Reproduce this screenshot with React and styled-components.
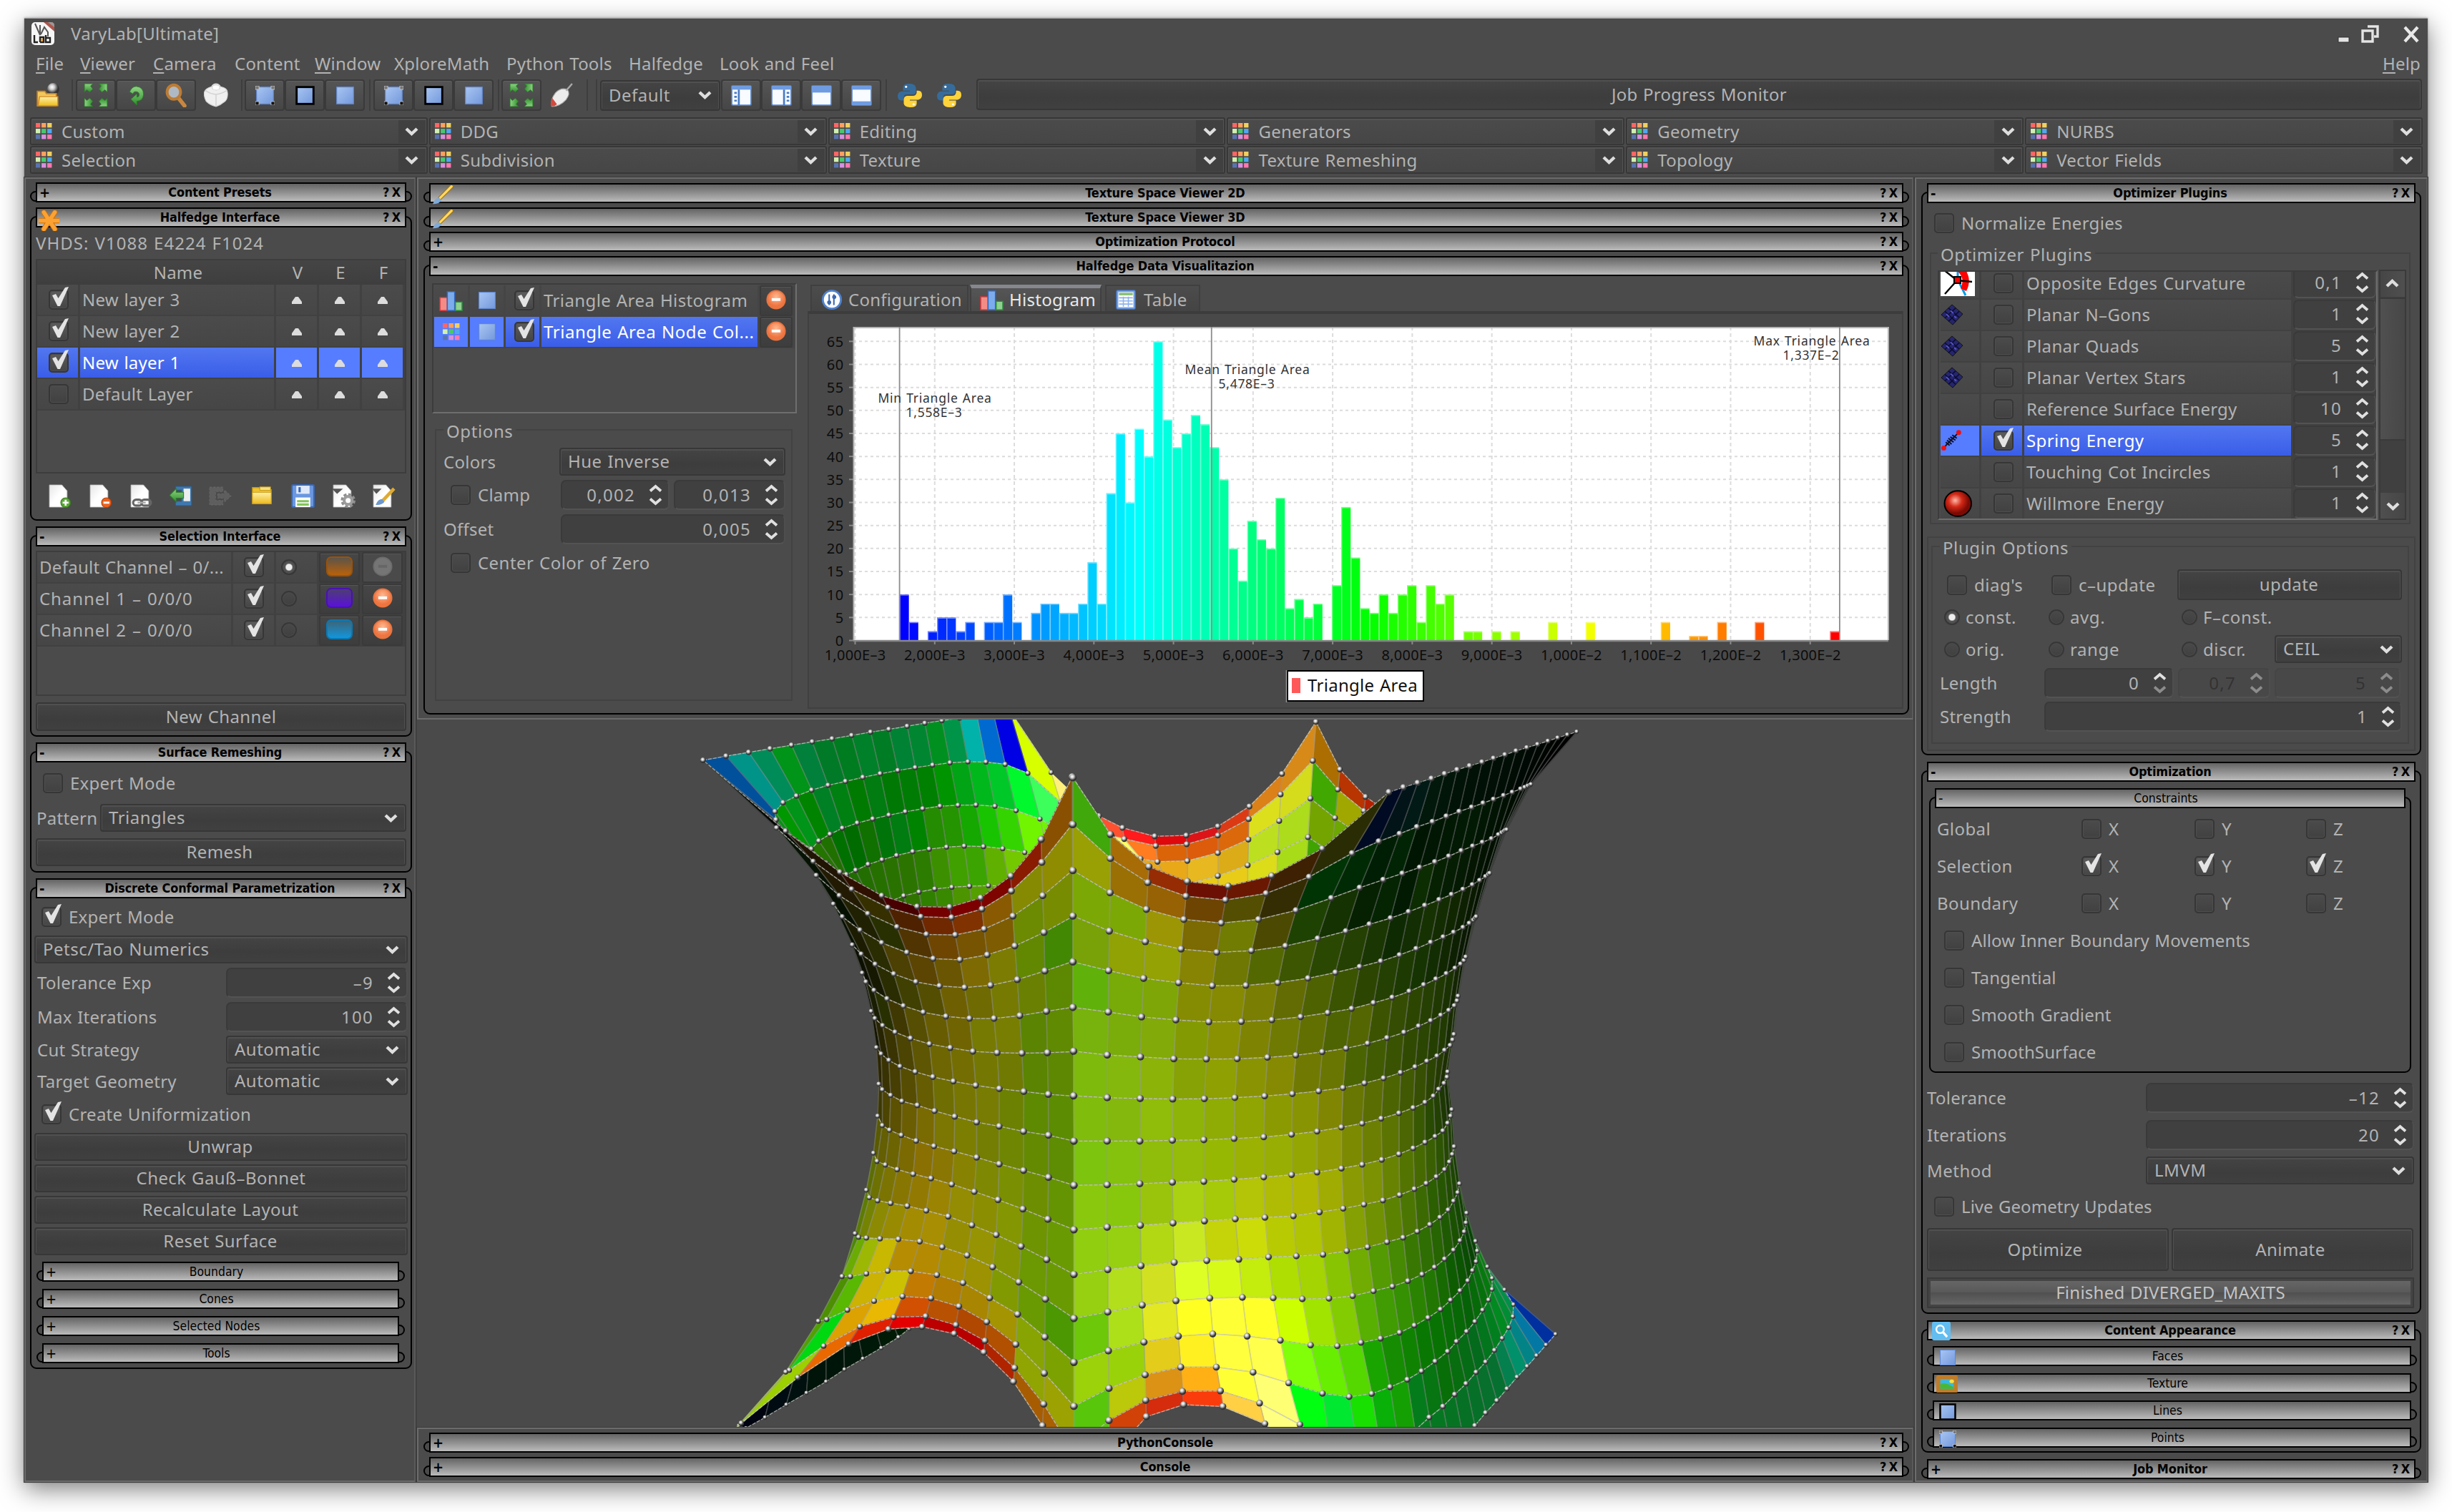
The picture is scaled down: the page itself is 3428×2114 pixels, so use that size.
import React from "react";
import styled, { createGlobalStyle, css } from "styled-components";

/* ------------------------------------------------------------------ */
/* Base                                                                */
/* ------------------------------------------------------------------ */

const BG = "#4b4b4b";
const INK = "#b3b3b3";
const EDGE = "#373737";

const GlobalStyle = createGlobalStyle`
  *, *::before, *::after { box-sizing: border-box; }
  body {
    margin: 0;
    background: #fff;
    color: ${INK};
    font-family: "Noto Sans", "Open Sans", sans-serif;
    font-size: 24px;
    line-height: 30px;
    letter-spacing: 0.25px;
    word-spacing: 1px;
  }
`;

const Desktop = styled.div`
  width: 3428px;
  height: 2114px;
  padding: 25px 34px 42px;
  overflow: hidden;
`;

const Frame = styled.div`
  width: 3360px;
  height: 2047px;
  display: flex;
  flex-direction: column;
  background: ${BG};
  border-top: 1px solid #a9a9a9;
  box-shadow: 0 10px 32px rgba(0, 0, 0, 0.5), 0 0 3px rgba(0, 0, 0, 0.35);
`;

const bevel = css`
  border: 2px solid ${EDGE};
  border-radius: 4px;
  background: linear-gradient(#444, #3d3d3d 60%, #404040);
  box-shadow: inset 0 1px 0 1px #505050;
`;

/* ------------------------------------------------------------------ */
/* Title and menu                                                      */
/* ------------------------------------------------------------------ */

const TitleRow = styled.div`
  flex: 0 0 42px;
  display: flex;
  align-items: center;
  padding: 0 12px 0 10px;
`;
const WindowTitle = styled.div`
  margin-left: 23px;
  flex: 1;
`;
const MenuRow = styled.div`
  flex: 0 0 40px;
  display: flex;
  align-items: center;
  padding: 2px 10px 0 16px;
`;
const MenuItem = styled.div`
  width: ${(p) => (p.$w ? p.$w + "px" : "auto")};
  letter-spacing: 0.2px;
  white-space: nowrap;
`;
const Mnemonic = styled.span`
  text-decoration: underline;
  text-decoration-thickness: 2px;
  text-underline-offset: 3px;
`;
const Spacer = styled.div`
  flex: 1;
`;

/* ------------------------------------------------------------------ */
/* Toolbar                                                             */
/* ------------------------------------------------------------------ */

const ToolRow = styled.div`
  flex: 0 0 50px;
  display: flex;
  align-items: center;
  padding: 0 8px 0 16px;
`;
const Tool = styled.div`
  width: 56px;
  height: 44px;
  display: flex;
  align-items: center;
  justify-content: center;
  border: 2px solid #3a3a3a;
  border-radius: 4px;
  background: linear-gradient(#555, #464646);
  box-shadow: inset 0 1px 0 #606060;
`;
const PlainTool = styled.div`
  height: 44px;
  display: flex;
  align-items: center;
  margin: 0 ${(p) => p.$r ?? 0}px 0 ${(p) => p.$l ?? 0}px;
`;
const Divider = styled.div`
  width: 2px;
  height: 44px;
  background: #3e3e3e;
  margin: 0 ${(p) => p.$r}px 0 ${(p) => p.$l}px;
`;
const Monitor = styled.div`
  ${bevel}
  flex: 1;
  height: 44px;
  margin: 0 0 3px 21px;
  display: flex;
  align-items: center;
  justify-content: center;
`;

const Shelf = styled.div`
  flex: 0 0 79px;
  margin: 6px 7px 5px 8px;
  display: grid;
  grid-template-columns: repeat(6, 1fr);
  grid-auto-rows: 39px;
  gap: 1px 2px;
`;
const ShelfItem = styled.div`
  display: flex;
  align-items: center;
  border: 2px solid ${EDGE};
  border-radius: 3px;
  padding-left: 6px;
  background: linear-gradient(#4b4b4b, #464646);
  box-shadow: inset 0 1px 0 1px #545454;
`;
const ShelfName = styled.div`
  flex: 1;
  margin-left: 13px;
`;
const ShelfArrow = styled.div`
  width: 38px;
  height: 32px;
  margin-right: 1px;
  display: flex;
  align-items: center;
  justify-content: center;
  background: #404040;
`;

/* ------------------------------------------------------------------ */
/* Columns and slots                                                   */
/* ------------------------------------------------------------------ */

const Body = styled.div`
  flex: 1;
  min-height: 0;
  display: flex;
  gap: 2px;
  background: #434343;
`;
const Column = styled.div`
  flex: 0 0 ${(p) => p.$w}px;
  min-width: 0;
  display: flex;
  flex-direction: column;
  background: ${BG};
  border: 2px solid #6c6c6c;
  border-right-color: #5a5a5a;
  outline: 1px solid #3b3b3b;
  padding: ${(p) => p.$pad};
  gap: ${(p) => p.$gap ?? 20}px;
`;
const Center = styled.div`
  flex: 0 0 2092px;
  min-width: 0;
  display: flex;
  flex-direction: column;
`;
const Dock = styled.div`
  flex: 0 0 ${(p) => p.$h}px;
  display: flex;
  flex-direction: column;
  gap: 19px;
  padding: ${(p) => p.$pad};
  background: ${BG};
  border: 2px solid #6c6c6c;
  border-right-color: #5a5a5a;
  outline: 1px solid #3b3b3b;
`;
const Viewport = styled.div`
  flex: 1;
  min-height: 0;
  background: #4a4a4a;
  svg { display: block; }
`;

const SlotBox = styled.section`
  flex: 0 0 ${(p) => p.$h}px;
  height: ${(p) => p.$h}px;
  margin: ${(p) => p.$m ?? 0};
  border: 2px solid #000;
  border-radius: 9px;
  display: flex;
  flex-direction: column;
`;
const SlotBar = styled.header`
  flex: 0 0 28px;
  margin: -14px 6px 0;
  position: relative;
  display: flex;
  align-items: center;
  border: 2px solid #000;
  background: linear-gradient(#646464, #8b8b8b 45%, #b2b2b2 90%, #bcbcbc);
  color: #000;
  font-family: "DejaVu Sans Condensed", "DejaVu Sans", sans-serif;
  font-stretch: condensed;
  font-size: ${(p) => (p.$sub ? 17.4 : 17.9)}px;
  font-weight: ${(p) => (p.$sub ? 400 : 700)};
  line-height: 22px;
  letter-spacing: ${(p) => (p.$sub ? 0 : -0.12)}px;
  word-spacing: 0;
`;
const SlotSign = styled.span`
  width: 46px;
  padding-left: 3px;
  display: flex;
  align-items: center;
  font-size: 20px;
`;
const SlotTitle = styled.span`
  flex: 1;
  text-align: center;
  padding-right: ${(p) => (p.$sub ? 12 : 3)}px;
`;
const SlotTools = styled.span`
  width: 46px;
  padding-right: 6px;
  text-align: right;
  word-spacing: -2px;
`;
/* Icons are taller than the bar, so they hang over its lower edge. */
const BarIcon = styled.span`
  position: absolute;
  left: ${(p) => p.$x}px;
  top: ${(p) => p.$y}px;
  display: flex;
`;

function Slot({ title, h = 15, sub, open, icon, ix = 2, iy = 1, m, children }) {
  return (
    <SlotBox $h={h} $m={m}>
      <SlotBar $sub={sub}>
        <SlotSign>{icon ? null : open ? "-" : "+"}</SlotSign>
        {icon && <BarIcon $x={ix} $y={iy}>{icon}</BarIcon>}
        <SlotTitle $sub={sub}>{title}</SlotTitle>
        <SlotTools>{sub ? "" : "? X"}</SlotTools>
      </SlotBar>
      {children}
    </SlotBox>
  );
}

/* ------------------------------------------------------------------ */
/* Controls                                                            */
/* ------------------------------------------------------------------ */

const Stack = styled.div`
  display: flex;
  flex-direction: column;
  padding: ${(p) => p.$pad ?? "0"};
  gap: ${(p) => p.$gap ?? 0}px;
`;
const Row = styled.div`
  display: flex;
  align-items: center;
  height: ${(p) => p.$h}px;
  padding-left: ${(p) => p.$l ?? 0}px;
  margin-top: ${(p) => p.$t ?? 0}px;
  gap: ${(p) => p.$gap ?? 0}px;
`;
const Label = styled.div`
  flex: 0 0 auto;
  width: ${(p) => (p.$w ? p.$w + "px" : "auto")};
  padding-left: ${(p) => p.$l ?? 0}px;
  letter-spacing: ${(p) => p.$track ?? 0.25}px;
  white-space: nowrap;
`;
const CheckWrap = styled.div`
  flex: 0 0 auto;
  width: ${(p) => (p.$w ? p.$w + "px" : "auto")};
  display: flex;
  align-items: center;
  gap: 10px;
  white-space: nowrap;
`;
const CheckSquare = styled.span`
  position: relative;
  flex: 0 0 28px;
  height: 28px;
  border: 2px solid #363636;
  border-radius: 5px;
  background: ${(p) => (p.$on ? "linear-gradient(#5c5c5c,#454545)" : "linear-gradient(#4b4b4b,#414141)")};
  box-shadow: inset 0 0 0 1px #4e4e4e;
  svg { position: absolute; left: 2px; top: -6px; }
`;
const RadioWrap = styled(CheckWrap)`
  gap: 8px;
`;
const RadioDot = styled.span`
  flex: 0 0 22px;
  height: 22px;
  border-radius: 50%;
  border: 2px solid #373737;
  background: ${(p) =>
    p.$on ? "radial-gradient(circle, #eee 0 4px, #555 5.5px, #4c4c4c 9px)" : "linear-gradient(#494949,#404040)"};
  box-shadow: inset 0 0 0 1px #4e4e4e;
`;
const Button = styled.button`
  ${bevel}
  flex: ${(p) => (p.$w ? `0 0 ${p.$w}px` : "1 0 auto")};
  height: ${(p) => p.$h ?? 39}px;
  margin: ${(p) => p.$t ?? 0}px 0 0;
  padding: 0 ${(p) => p.$r ?? 2}px 1px 0;
  color: ${INK};
  font: inherit;
  letter-spacing: 0.4px;
  word-spacing: inherit;
  text-align: center;
`;
const ComboBox = styled.div`
  ${bevel}
  flex: ${(p) => (p.$w ? `0 0 ${p.$w}px` : "1 0 auto")};
  height: ${(p) => p.$h ?? 39}px;
  display: flex;
  align-items: center;
  justify-content: space-between;
  padding: 0 10px 1px 10px;
  letter-spacing: 0.5px;
`;
const SpinBox = styled.div`
  flex: ${(p) => (p.$w ? `0 0 ${p.$w}px` : "1 0 auto")};
  height: ${(p) => p.$h ?? 42}px;
  display: flex;
  align-items: center;
  justify-content: flex-end;
  gap: 20px;
  padding: 0 8px 1px;
  border: 2px solid ${(p) => (p.$off ? "#454545" : "#3a3a3a")};
  border-bottom-color: #535353;
  border-right-color: #4e4e4e;
  border-radius: 7px;
  background: ${(p) => (p.$off ? "#484848" : "#404040")};
  color: ${(p) => (p.$off ? "#333" : INK)};
  letter-spacing: 1.3px;
  svg { margin-left: -1px; }
`;
const Group = styled.div`
  height: ${(p) => p.$h}px;
  margin: ${(p) => p.$m};
  padding: 0 ${(p) => p.$pr ?? 8}px 0 ${(p) => p.$pl ?? 10}px;
  border: 2px solid #424242;
  display: flex;
  flex-direction: column;
`;
const GroupTitle = styled.div`
  align-self: flex-start;
  height: 24px;
  line-height: 24px;
  margin: -11px 0 0 ${(p) => p.$l ?? 0}px;
  padding: 0 4px;
  background: ${BG};
  letter-spacing: 0.6px;
`;

const Tick = () => (
  <svg width="24" height="28" viewBox="0 0 24 28">
    <path d="M1 12 L6 10 L9.5 16 L19 1 L24 0 L12 27 L8.5 27 Z" fill="#e4e4e4" />
  </svg>
);
const Chevron = () => (
  <svg width="19" height="13" viewBox="0 0 19 13">
    <path d="M2 3 L9.5 10 L17 3" fill="none" stroke="#dedede" strokeWidth="4.4" />
  </svg>
);
const Arrows = ({ off, half }) => (
  <svg width="19" height="30" viewBox="0 0 19 30">
    <path d="M2 9.5 L9.5 3 L17 9.5" fill="none" stroke={off ? "#8c8c8c" : "#e0e0e0"} strokeWidth="3.8" />
    <path d="M2 20.5 L9.5 27 L17 20.5" fill="none" stroke={off || half ? "#8c8c8c" : "#e0e0e0"} strokeWidth="3.8" />
  </svg>
);

const Check = ({ on, children, w, track }) => (
  <CheckWrap $w={w}>
    <CheckSquare $on={on}>{on && <Tick />}</CheckSquare>
    {children && <Label $track={track}>{children}</Label>}
  </CheckWrap>
);
const Radio = ({ on, children, w }) => (
  <RadioWrap $w={w}>
    <RadioDot $on={on} />
    {children && <Label $track={0.6}>{children}</Label>}
  </RadioWrap>
);
const Combo = ({ children, w, h }) => (
  <ComboBox $w={w} $h={h}><span>{children}</span><Chevron /></ComboBox>
);
const Spin = ({ children, w, h, off, half }) => (
  <SpinBox $w={w} $h={h} $off={off}><span>{children}</span><Arrows off={off} half={half} /></SpinBox>
);

/* ------------------------------------------------------------------ */
/* Icons                                                               */
/* ------------------------------------------------------------------ */

const HiddenSvg = styled.svg`
  position: absolute;
`;
const Defs = () => (
  <HiddenSvg width="0" height="0">
    <defs>
      <linearGradient id="blue" x1="0" y1="0" x2="1" y2="1"><stop offset="0" stopColor="#a9c6f2" /><stop offset="1" stopColor="#7398dc" /></linearGradient>
      <linearGradient id="gold" x1="0" y1="0" x2="0" y2="1"><stop offset="0" stopColor="#fff0a8" /><stop offset="1" stopColor="#edbb1c" /></linearGradient>
      <radialGradient id="minus" cx=".5" cy=".35"><stop offset="0" stopColor="#ffb991" /><stop offset="1" stopColor="#ee7440" /></radialGradient>
      <radialGradient id="ball" cx=".4" cy=".34"><stop offset="0" stopColor="#fff" /><stop offset=".4" stopColor="#d0d0d0" /><stop offset="1" stopColor="#333" /></radialGradient>
      <radialGradient id="red" cx=".4" cy=".38"><stop offset="0" stopColor="#ffb8a8" /><stop offset=".5" stopColor="#d42a18" /><stop offset="1" stopColor="#7c0a04" /></radialGradient>
      <linearGradient id="leaf" x1="0" y1="0" x2="0" y2="1"><stop offset="0" stopColor="#8fd484" /><stop offset="1" stopColor="#2f8f2c" /></linearGradient>
      <linearGradient id="paper" x1="0" y1="0" x2="1" y2="1"><stop offset="0" stopColor="#e6e6e6" /><stop offset=".5" stopColor="#fff" /></linearGradient>
    </defs>
  </HiddenSvg>
);

const Ico = ({ s = 32, w, children }) => (
  <svg width={w ?? s} height={s} viewBox="0 0 32 32" preserveAspectRatio="none">{children}</svg>
);

const Palette = ({ s = 24 }) => {
  const c = ["#ff6666", "#ffa060", "#f0d060", "#d0f0b0", "#48c870", "#50a8f0", "#5874b0", "#d890e0", "#ff78b0"];
  return (
    <svg width={s} height={s} viewBox="0 0 24 24">
      {c.map((f, i) => <rect key={i} x={(i % 3) * 8.4} y={Math.floor(i / 3) * 8.4} width="6.6" height="6.6" fill={f} />)}
    </svg>
  );
};
const AppIcon = () => (
  <Ico>
    <rect width="32" height="32" rx="5" fill="#f6f6f6" />
    <path d="M17 0 L32 13 V5 Q32 0 27 0 Z" fill="#b0564c" />
    <path d="M23 0 L32 7 V5 Q32 0 27 0 Z" fill="#999" />
    <path d="M5 2 L12 18 V4 M13 17 L18 7 L23 14 V20" fill="none" stroke="#555" strokeWidth="2" />
    <path d="M4 18 V28 H9 M12 28 V21 H17 V28 H12 M20 18 V28 H26 V22 H20" fill="none" stroke="#222" strokeWidth="2.4" />
    <rect x="13" y="23" width="3" height="4" fill="#e8a030" />
  </Ico>
);
const OpenIcon = () => (
  <Ico s={34}>
    <circle cx="23" cy="8" r="8" fill="url(#ball)" />
    <path d="M2 11 H12 L14 14 H27 V30 H2 Z" fill="#f2c75c" stroke="#c98224" strokeWidth="1.6" />
    <path d="M5 18 H29 V30 H3 Z" fill="url(#gold)" stroke="#d48c28" strokeWidth="1.4" />
  </Ico>
);
const ExpandIcon = () => (
  <Ico s={34} w={34}>
    {[0, 90, 180, 270].map((a) => (
      <path key={a} transform={`rotate(${a} 16 16)`} d="M1 1 H12 L9 4 L12 8 L8 12 L4 9 L1 12 Z" fill="url(#leaf)" stroke="#2c7a2a" strokeWidth=".8" />
    ))}
  </Ico>
);
const RotateIcon = () => (
  <Ico s={30} w={27}>
    <path d="M5 11 Q9 3 16 3 Q28 4 28 15 Q27 25 17 25 V31 L7 22 L17 14 V19 Q21 19 21 15 Q20 10 13 11 L10 14 Z" fill="url(#leaf)" stroke="#2c7a2a" />
  </Ico>
);
const LensIcon = () => (
  <Ico s={34} w={32}>
    <path d="M18 18 L28 30" stroke="#c88740" strokeWidth="5.5" strokeLinecap="round" />
    <circle cx="13" cy="12" r="9.4" fill="#aeb9c4" stroke="#bd7c34" strokeWidth="4" />
  </Ico>
);
const CubeIcon = () => (
  <Ico s={34}>
    <path d="M16 1 Q20 1 22 5 Q31 7 31 12 Q32 20 28 24 Q22 29 16 31 Q8 29 3 24 Q-1 16 1 11 Q3 7 10 5 Q12 1 16 1" fill="#f0f0f0" stroke="#d4d4d4" />
    <path d="M2 10 Q10 15 16 15 Q24 14 30 10 M16 15 V30" fill="none" stroke="#d2d2d2" strokeWidth="1.4" />
    <ellipse cx="16" cy="6" rx="5" ry="3.4" fill="#fff" stroke="#d0d0d0" />
  </Ico>
);
const FaceIcon = ({ s = 27, edge, points }) => (
  <Ico s={s}>
    <rect x="2" y="2" width="28" height="28" fill="url(#blue)" stroke={edge ? "#000" : "#5f86cf"} strokeWidth={edge ? 3.4 : 1.4} />
    {points && [[3, 3], [29, 3], [3, 29], [29, 29]].map(([x, y], i) => (
      <rect key={i} x={x - 3} y={y - 3} width="6" height="6" fill={i > 1 ? "#111" : "#777"} stroke="#ccc" strokeWidth="1" />
    ))}
  </Ico>
);
const MouseIcon = () => (
  <Ico s={34}>
    <path d="M3 31 Q1 22 8 13 Q16 5 24 9 Q28 14 22 22 Q14 31 3 31" fill="#ececec" stroke="#aaa" />
    <path d="M2 30 Q1 26 4 20 L10 28 Q6 32 2 30" fill="#d24a40" />
    <path d="M22 10 Q26 6 30 1" stroke="#aaa" strokeWidth="2.2" fill="none" />
  </Ico>
);
const LayoutIcon = ({ side }) => (
  <Ico s={29}>
    <rect x="1" y="1" width="30" height="30" rx="2" fill="#f8fbff" stroke="#4a7cc4" strokeWidth="2" />
    <rect x="1" y="1" width="30" height="6" fill="#6f9be0" />
    {side === "left" && <path d="M12 7 V31 M5 12 H9 M5 18 H9 M5 24 H9" stroke="#4a7cc4" strokeWidth="3" />}
    {side === "right" && <path d="M20 7 V31 M24 12 H28 M24 18 H28 M24 24 H28" stroke="#4a7cc4" strokeWidth="3" />}
    {side === "top" && <path d="M1 9 H31" stroke="#6f9be0" strokeWidth="5" />}
    {side === "bottom" && <path d="M1 28 H31" stroke="#6f9be0" strokeWidth="6" />}
  </Ico>
);
const PythonIcon = () => (
  <Ico s={34}>
    <path d="M15 1 Q7 1 7 6 V10 H16 V11 H5 Q0 12 0 17 Q0 23 5 23 H8 V19 Q8 15 12 15 H20 Q24 15 24 11 V6 Q23 1 15 1" fill="#366c9c" />
    <path d="M17 32 Q25 32 25 27 V23 H16 V22 H27 Q32 21 32 16 Q32 10 27 10 H25 V13 Q24 17 20 17 H12 Q8 18 8 22 V27 Q9 32 17 32" fill="#ffd33c" />
    <circle cx="11" cy="5" r="1.5" fill="#fff" /><circle cx="21" cy="28" r="1.5" fill="#fff" />
  </Ico>
);
const StarIcon = () => (
  <Ico s={29}>
    <path d="M8 3 L25 29 M25 3 L8 29 M1 16 H31" stroke="#c9700f" strokeWidth="8" strokeLinecap="round" />
    <path d="M8 3 L25 29 M25 3 L8 29 M1 16 H31" stroke="#fba233" strokeWidth="6" strokeLinecap="round" />
  </Ico>
);
const BrushIcon = () => (
  <Ico s={27} w={30}>
    <path d="M12 21 L29 2" stroke="#a37414" strokeWidth="6" strokeLinecap="round" />
    <path d="M12 21 L29 2" stroke="#ffd964" strokeWidth="3.6" strokeLinecap="round" />
    <path d="M1 31 Q4 21 11 21 L14 25 Q10 32 1 31" fill="#7fa9d8" />
  </Ico>
);
const MinusIcon = ({ off }) => (
  <Ico s={28}>
    <circle cx="16" cy="16" r="14.5" fill={off ? "#757575" : "url(#minus)"} stroke={off ? "#6c6c6c" : "#e8743e"} strokeWidth="2" />
    <rect x="9" y="13.5" width="14" height="4.5" fill={off ? "#666" : "#fff"} />
  </Ico>
);
const BarsIcon = () => (
  <Ico s={29} w={33}>
    <rect x="1" y="11" width="10" height="20" fill="#f48c86" stroke="#d8383c" strokeWidth="1.5" />
    <rect x="11" y="2" width="10" height="29" fill="#7cacec" stroke="#3468c0" strokeWidth="1.5" />
    <rect x="22" y="18" width="9" height="13" fill="#90d090" stroke="#2f9040" strokeWidth="1.5" />
  </Ico>
);
const SlidersIcon = () => (
  <Ico s={30}>
    <circle cx="16" cy="16" r="15" fill="#4f82cc" /><circle cx="16" cy="16" r="12" fill="#fff" />
    <path d="M12 8 V24 M19 8 V24" stroke="#3c6ab0" strokeWidth="2.2" />
    <circle cx="12" cy="20" r="3" fill="#3c6ab0" /><circle cx="19.5" cy="12" r="3" fill="#3c6ab0" />
  </Ico>
);
const SheetIcon = () => (
  <Ico s={28}>
    <rect x="1" y="1" width="30" height="30" rx="2" fill="#7ca5e4" stroke="#4477c2" strokeWidth="1.5" />
    <rect x="4" y="4" width="24" height="24" fill="#fff" /><rect x="5" y="5" width="22" height="4" fill="#88c070" />
    <path d="M5 13 H27 M5 18 H27 M5 23 H27 M12 11 V27 M20 11 V27" stroke="#8fb3ea" strokeWidth="1.8" />
  </Ico>
);
const DocIcon = ({ kind }) => (
  <Ico s={33}>
    <path d="M2 1 H19 L26 9 V31 H2 Z" fill="url(#paper)" stroke="#bbb" strokeWidth=".8" />
    {kind === "add" && <><circle cx="24" cy="25" r="6.6" fill="#5da838" stroke="#367a1c" /><path d="M24 21 V29 M20 25 H28" stroke="#fff" strokeWidth="2.6" /></>}
    {kind === "remove" && <><circle cx="24" cy="25" r="6.6" fill="#ee6320" stroke="#b0410c" /><path d="M20 25 H28" stroke="#fff" strokeWidth="2.8" /></>}
    {kind === "link" && <><rect x="5" y="21" width="12" height="8" rx="4" fill="none" stroke="#666" strokeWidth="3" /><rect x="16" y="21" width="13" height="8" rx="4" fill="none" stroke="#666" strokeWidth="3" /><path d="M11 25 H22" stroke="#aaa" strokeWidth="2.4" /></>}
    {kind === "gear" && <><path d="M0 6 H15 L7 13 Z" fill="#555" /><circle cx="22" cy="22" r="7" fill="none" stroke="#8e8e8e" strokeWidth="6" strokeDasharray="3.4 2.1" /><circle cx="22" cy="22" r="5.4" fill="none" stroke="#9c9c9c" strokeWidth="4" /></>}
    {kind === "edit" && <><path d="M0 6 H13 L6 13 Z" fill="#555" /><path d="M15 22 L30 6" stroke="#e0aa30" strokeWidth="4.5" /><path d="M5 28 Q8 20 14 20 L17 24 Q12 29 5 28" fill="#6d98cc" /></>}
  </Ico>
);
const ImportIcon = () => (
  <Ico s={33}>
    <path d="M9 3 H31 V29 H9 V23 H17 V8 H9 Z" fill="#3f78ae" stroke="#2a5884" />
    <rect x="20" y="6" width="9" height="17" fill="#eee" />
    <path d="M1 15 L10 6 V11 H20 V19 H10 V24 Z" fill="url(#leaf)" stroke="#2c7a2a" />
  </Ico>
);
const ExportIcon = () => (
  <Ico s={33}>
    <path d="M2 4 H20 V10 H10 V22 H20 V28 H2 Z M13 13 H22 V8 L31 16 L22 24 V19 H13 Z" fill="#5e5e5e" stroke="#676767" strokeDasharray="3 2" />
  </Ico>
);
const FolderIcon = () => (
  <Ico s={30}>
    <path d="M2 4 H12 L14 7 H30 V28 H2 Z" fill="#eec22e" stroke="#c79a18" strokeWidth="1.4" />
    <path d="M2 11 H30 V28 H2 Z" fill="url(#gold)" stroke="#c79a18" /><rect x="13" y="3" width="16" height="5" fill="#f6df7a" stroke="#c79a18" />
  </Ico>
);
const DiskIcon = () => (
  <Ico s={33}>
    <rect x="1" y="1" width="30" height="30" rx="2" fill="#6b97e0" stroke="#3867b4" strokeWidth="2" />
    <rect x="7" y="2" width="18" height="11" fill="#dfe9fa" /><rect x="10" y="4" width="3" height="7" fill="#3867b4" />
    <rect x="6" y="18" width="20" height="13" fill="#fff" /><path d="M8 23 H24 M8 27.5 H24" stroke="#84c45c" strokeWidth="3" />
  </Ico>
);
const CurvatureIcon = () => (
  <svg width="48" height="37" viewBox="0 0 48 37">
    <rect width="48" height="37" fill="#fff" />
    <path d="M24 0 V14 L35 36" stroke="#009ee8" strokeWidth="3" fill="none" />
    <path d="M28 0 Q40 12 32 28" stroke="#f00" strokeWidth="9" fill="none" />
    <path d="M4 0 L23 15 M23 15 L6 34 M23 15 L44 17 M36 3 L39 0" stroke="#000" strokeWidth="2.4" />
    <rect x="19" y="10" width="9" height="9" fill="#f00" stroke="#000" strokeWidth="2" />
  </svg>
);
const PlanarIcon = () => (
  <Ico s={30} w={32}>
    <path d="M16 1 L31 15 L17 31 L1 16 Z" fill="#26266e" stroke="#111" />
    <path d="M11 6 L26 20 M6 11 L21 26 M21 6 L6 21 M26 11 L11 26" stroke="#0c0c34" strokeWidth="1.6" />
    <path d="M14 10 L18 14 M8 15 L12 19 M19 18 L22 21" stroke="#5656c8" strokeWidth="2" />
  </Ico>
);
const SpringIcon = () => (
  <Ico s={29}>
    <path d="M5 28 L10 22 M8 19 L14 24 M10 16 L17 22 M12 13 L20 19 M15 11 L23 16 M18 8 L25 13 M10 22 L28 4" fill="none" stroke="#10102c" strokeWidth="2.2" />
    <circle cx="5" cy="28" r="3.8" fill="#f01010" /><circle cx="28" cy="4" r="3.8" fill="#f01010" />
  </Ico>
);
const BallIcon = () => (
  <Ico s={38} w={46}><circle cx="17" cy="16" r="15" fill="url(#red)" stroke="#000" strokeWidth="1.6" transform="translate(16 0) scale(.87 1) translate(-16 0)" /></Ico>
);
const SearchIcon = () => (
  <Ico s={26}>
    <rect width="32" height="32" rx="3" fill="#62bdf0" /><circle cx="14" cy="13" r="6.5" fill="none" stroke="#fff" strokeWidth="3" />
    <path d="M19 18 L26 26" stroke="#fff" strokeWidth="4" />
  </Ico>
);
const PictureIcon = () => (
  <Ico s={24} w={30}>
    <rect width="32" height="32" rx="2" fill="#c07c28" /><rect x="6" y="7" width="20" height="18" fill="#38b8e0" />
    <path d="M6 16 Q14 12 26 22 V25 H6 Z" fill="#48b838" /><circle cx="23" cy="11" r="3.4" fill="#f8e040" />
  </Ico>
);
const Dome = () => (
  <svg width="14" height="11" viewBox="0 0 14 11"><path d="M0 8 L5 1 H9 L14 8 V11 H0 Z" fill="#dcdcdc" /></svg>
);

/* ------------------------------------------------------------------ */
/* Tables                                                              */
/* ------------------------------------------------------------------ */

const Table = styled.div`
  height: ${(p) => p.$h}px;
  border: 2px solid #3d3d3d;
  background: ${BG};
  overflow: hidden;
`;
const LayerGrid = styled.div`
  display: grid;
  grid-template-columns: 60px 274px 60px 60px 60px;
  grid-auto-rows: 44px;
  background: #414141;
`;
const ChannelGrid = styled(LayerGrid)`
  grid-template-columns: 274px 60px 60px 60px 60px;
`;
const HeadGrid = styled(LayerGrid)`
  grid-auto-rows: 34px;
  background: linear-gradient(#454545, #3e3e3e);
  line-height: 34px;
  text-align: center;
`;
const selected = css`
  background: linear-gradient(#5277f0, #3a5de8);
  color: #fff;
`;
const Cell = styled.div`
  margin: 0 3px 2px 0;
  display: flex;
  align-items: center;
  justify-content: ${(p) => (p.$text ? "flex-start" : "center")};
  padding-left: ${(p) => p.$l ?? 0}px;
  background: linear-gradient(#4b4b4b, #464646);
  white-space: nowrap;
  overflow: ${(p) => (p.$text ? "hidden" : "visible")};
  letter-spacing: ${(p) => p.$track ?? 0.25}px;
  ${(p) => p.$sel && selected}
  ${(p) => p.$flat && "background: #567dff;"}
`;
const RadioCell = styled(Cell)`
  padding-right: 22px;
`;
const ActionCell = styled.div`
  margin: 0 3px 1px 0;
  display: flex;
  align-items: center;
  justify-content: center;
  padding-bottom: 4px;
  border: 2px solid #3a3a3a;
  border-radius: 3px;
  background: ${(p) => (p.$off ? "#4a4a4a" : "linear-gradient(#464646,#3d3d3d)")};
  box-shadow: inset 0 1px 0 #565656;
`;
const Swatch = styled.span`
  width: 37px;
  height: 28px;
  border-radius: 7px;
  border: 2px solid ${(p) => p.$edge};
  background: linear-gradient(${(p) => p.$top}, ${(p) => p.$fill});
`;
const IconBar = styled.div`
  height: 62px;
  display: grid;
  grid-template-columns: 57px 57px 55px 55px 60px 56px 57px 56px 33px;
  align-items: center;
  padding-left: 17px;
`;

const DataList = styled.div`
  width: 510px;
  height: 182px;
  padding: 1px;
  border: 2px solid #3c3c3c;
  border-right-color: #6e6e6e;
  border-bottom-color: #6e6e6e;
`;
const DataGrid = styled.div`
  display: grid;
  grid-template-columns: 50px 50px 50px 305px 49px;
  grid-auto-rows: 44px;
  background: #454545;
`;
const PluginList = styled.div`
  width: 615px;
  height: 349px;
  overflow: hidden;
  border: 2px solid #3c3c3c;
  border-right-color: #6e6e6e;
  border-bottom-color: #6e6e6e;
  padding-left: 2px;
`;
const PluginGrid = styled.div`
  margin-top: -5px;
  display: grid;
  grid-template-columns: 57px 60px 376px 116px;
  grid-auto-rows: 44px;
  background: #414141;
`;
const PluginIcon = styled(Cell)`
  justify-content: flex-start;
`;
const ScrollBar = styled.div`
  width: 38px;
  height: 350px;
  margin-left: 2px;
  display: flex;
  flex-direction: column;
  background: #404040;
  border: 2px solid #3a3a3a;
`;
const ScrollEnd = styled.div`
  flex: 0 0 36px;
  display: flex;
  align-items: center;
  justify-content: center;
  background: linear-gradient(90deg, #4f4f4f, #464646);
  transform: ${(p) => (p.$up ? "rotate(180deg)" : "none")};
`;
const ScrollThumb = styled.div`
  flex: 0 0 200px;
  margin-top: 1px;
  border-top: 2px solid #3a3a3a;
  border-bottom: 2px solid #3a3a3a;
  background: linear-gradient(90deg, #505050, #474747);
`;

/* ------------------------------------------------------------------ */
/* Visualization tabs                                                  */
/* ------------------------------------------------------------------ */

const VizBody = styled.div`
  flex: 1;
  display: flex;
  padding: 10px 6px 0 10px;
`;
const VizLeft = styled.div`
  width: 525px;
`;
const VizRight = styled.div`
  flex: 1;
  padding-top: 2px;
`;
const Tabs = styled.div`
  height: 37px;
  display: flex;
  align-items: flex-end;
  padding-left: 4px;
`;
const Tab = styled.div`
  width: ${(p) => p.$w}px;
  height: 37px;
  margin-right: ${(p) => p.$r ?? 0}px;
  display: flex;
  align-items: center;
  gap: 8px;
  padding: 2px 0 0 ${(p) => p.$l}px;
  border: 2px solid #404040;
  border-bottom: 0;
  white-space: nowrap;
  background: linear-gradient(#4c4c4c, #444);
  ${(p) =>
    p.$on &&
    `background: linear-gradient(#555, ${BG}); color: #e8e8e8; border-top: 5px solid #85868e; padding-top: 0;`}
`;
const TabPane = styled.div`
  height: 556px;
  border: 2px solid #404040;
  border-top: 4px solid #3c3c3c;
  background: #494949;
  svg { display: block; }
`;

const COUNTS = {
  0: 10, 1: 4, 3: 2, 4: 5, 5: 5, 6: 2, 7: 4, 9: 4, 10: 4, 11: 10, 12: 4, 14: 6, 15: 8, 16: 8, 17: 6, 18: 6, 19: 8,
  20: 17, 21: 8, 22: 32, 23: 45, 24: 30, 25: 46, 26: 40, 27: 65, 28: 48, 29: 42, 30: 45, 31: 49, 32: 47, 33: 42,
  34: 35, 35: 20, 36: 13, 37: 26, 38: 22, 39: 20, 40: 31, 41: 7, 42: 9, 43: 5, 44: 8, 46: 12, 47: 29, 48: 18, 49: 7,
  50: 6, 51: 10, 52: 6, 53: 10, 54: 12, 55: 4, 56: 12, 57: 8, 58: 10, 60: 2, 61: 2, 63: 2, 65: 2, 69: 4, 73: 4,
  81: 4, 84: 1, 85: 1, 87: 4, 91: 4, 99: 2,
};
const X_TICKS = ["1,000E–3", "2,000E–3", "3,000E–3", "4,000E–3", "5,000E–3", "6,000E–3", "7,000E–3", "8,000E–3",
  "9,000E–3", "1,000E–2", "1,100E–2", "1,200E–2", "1,300E–2"];
const px = (v) => 64.5 + 111.27 * (v - 1);
const py = (n) => 456.5 - 6.434 * n;

const AxisText = styled.text`
  font-size: 20px;
  letter-spacing: ${(p) => p.$track ?? 0.7}px;
  word-spacing: 0;
  fill: #0c0c0c;
`;
const NoteText = styled.text`
  font-size: 17.5px;
  letter-spacing: ${(p) => p.$track ?? 0.75}px;
  fill: #333;
  text-anchor: middle;
`;

function Histogram() {
  const notes = [
    [1.558, 176, 124, "Min Triangle Area", "1,558E–3"],
    [5.478, 613, 84, "Mean Triangle Area", "5,478E–3"],
    [13.37, 1402, 44, "Max Triangle Area", "1,337E–2"],
  ];
  return (
    <svg width="1528" height="550" viewBox="0 0 1528 550">
      <rect x="62" y="18" width="1447" height="439" fill="#fff" />
      {X_TICKS.map((t, i) => (
        <g key={t}>
          <path d={`M${px(i + 1)} 18 V456`} stroke="#dcdcdc" strokeWidth="2" strokeDasharray="5 4" />
          <path d={`M${px(i + 1)} 457 V462`} stroke="#8a8a8a" strokeWidth="2" />
          <AxisText x={px(i + 1)} y="484" textAnchor="middle" $track={0.25}>{t}</AxisText>
        </g>
      ))}
      {Array.from({ length: 14 }, (_, i) => i * 5).map((n) => (
        <g key={n}>
          {n > 0 && <path d={`M62 ${py(n)} H1509`} stroke="#dcdcdc" strokeWidth="2" strokeDasharray="4 4" />}
          <path d={`M56 ${py(n)} H62`} stroke="#8a8a8a" strokeWidth="2" />
          <AxisText x="49" y={py(n) + 7.5} textAnchor="end">{n}</AxisText>
        </g>
      ))}
      {Object.entries(COUNTS).map(([i, n]) => {
        const x = 126.5 + 13.14 * i;
        const fill = `hsl(${240 * (1 - i / 99)} 100% 50%)`;
        return (
          <g key={i}>
            <rect x={x} y={py(n)} width="13.14" height={456.5 - py(n)} fill={fill} />
            <path d={`M${x + 0.6} 456 V${py(n) + 0.8} H${x + 13.1}`} fill="none" stroke="#fff" strokeOpacity=".45" strokeWidth="1.5" />
          </g>
        );
      })}
      <path d="M62 457 H1509" stroke="#868686" strokeWidth="2.4" />
      <path d="M62 19 H1509 V456 M62.5 18 V456" stroke="#b4b4b4" strokeWidth="2" fill="none" />
      {notes.map(([v, x, y, a, b]) => (
        <g key={a}>
          <path d={`M${px(v)} 18 V456`} stroke="#8c8c8c" strokeWidth="1.8" />
          <NoteText x={x} y={y}>{a}</NoteText>
          <NoteText x={x - 1} y={y + 19.5} $track={0.7}>{b}</NoteText>
        </g>
      ))}
      <rect x="669" y="499" width="190" height="42" fill="#fff" stroke="#000" strokeWidth="2" />
      <path d="M667.5 543 V498" stroke="#999" strokeWidth="1.5" />
      <rect x="675" y="509" width="12" height="21" fill="#ff5858" />
      <text x="697" y="528" fontSize="24" letterSpacing=".3" fill="#111">Triangle Area</text>
    </svg>
  );
}

/* ------------------------------------------------------------------ */
/* 3D view                                                             */
/* ------------------------------------------------------------------ */

/* Camera frames: each maps projected mesh samples to scene pixels. */
const frame = (ox, oy, sx, sy) => (row) => {
  const out = [];
  for (let i = 0; i < row.length; i += 2) out.push([ox + row[i] / sx, oy + row[i + 1] / sy]);
  return out;
};
const upperLeft = frame(960, 990, 2.306, 2.8);
const upperRight = frame(1500, 990, 2.063, 2.613);
const lower = frame(960, 1540, 1.206, 2.8);

const RIGHT_FACE = [
  ...[
    [0,257,108,464,219,582,330,636,448,653,573,615,719,516,911,310,953,292,994,276,1034,260,1072,243,1108,228,1144,214,1180,200,1213,186,1246,173,1278,159,1309,147,1340,135,1370,123,1398,111,1426,100,1453,89],
    [0,428,108,552,216,640,326,690,440,704,557,680,681,620,805,533,882,490,942,462,992,437,1037,418,1077,398,1114,381,1150,365,1183,350,1213,336,1242,322,1267,310,1291,298,1303,292,1312,287,1318,284,1321,281],
    [0,596,107,677,212,738,320,775,428,788,535,775,643,742,745,697,827,659,895,630,950,607,1000,585,1044,565,1084,544,1120,524,1153,507,1181,493,1207,480,1227,465,1237,458,1243,453,1247,449,1251,447],
    [0,762,105,817,209,856,312,883,415,895,515,889,613,872,706,845,787,818,855,793,916,770,968,747,1015,724,1056,703,1092,684,1125,665,1152,648,1173,632,1190,618,1198,611,1202,606],
    [0,930,103,962,204,990,305,1006,402,1017,499,1016,591,1006,678,990,757,969,827,948,888,928,942,905,990,882,1032,859,1068,839,1098,822,1125,804,1143,789,1155,777,1160,770,1163,765],
    [0,1096,102,1113,198,1131,297,1142,392,1149,486,1148,574,1142,657,1131,735,1116,804,1101,867,1080,921,1060,970,1038,1012,1014,1047,993,1077,973,1102,953,1118,938,1128,925,1133,912],
    [2,1256,99,1270,195,1277,291,1284,385,1285,474,1284,561,1279,643,1271,719,1259,788,1246,850,1228,906,1208,955,1188,997,1165,1032,1145,1061,1125,1084,1107,1100,1090,1108,1072,1111,1055],
    [2,1419,99,1426,194,1429,288,1431,379,1430,467,1426,553,1420,633,1412,709,1402,779,1390,841,1373,896,1355,945,1335,987,1314,1021,1293,1050,1274,1072,1253,1088,1235,1095,1215,1099,1195],
  ].map(upperRight),
  ...[
    [653,158,709,158,764,158,819,155,872,153,923,148,973,142,1020,132,1063,120,1104,104,1139,89,1171,70,1201,49,1225,28,1245,7,1259,-18,1268,-45,1277,-68,1282,-92,1283,-113],
    [653,331,709,329,764,325,819,319,872,316,923,308,973,299,1020,290,1063,280,1104,265,1139,250,1172,231,1201,209,1225,186,1245,163,1262,140,1275,118,1283,88,1288,60,1290,35],
    [653,505,709,495,765,488,820,479,873,471,925,463,975,457,1023,451,1067,436,1107,422,1142,406,1174,390,1202,369,1227,346,1247,324,1264,298,1278,270,1286,240,1291,210,1294,180],
    [653,680,710,661,766,646,822,633,877,626,931,621,981,612,1028,608,1073,602,1113,588,1148,573,1181,553,1208,536,1232,512,1253,485,1270,457,1284,428,1293,393,1300,360,1303,325],
    [653,852,710,827,768,800,825,783,882,773,937,770,989,772,1038,776,1083,774,1123,764,1158,745,1190,727,1216,706,1240,680,1261,652,1278,620,1293,585,1304,548,1311,513,1314,478,1315,440],
    [653,1024,711,979,771,945,829,922,887,913,945,922,1001,938,1052,957,1097,960,1137,947,1170,931,1202,908,1227,880,1250,850,1271,817,1288,781,1304,744,1317,705,1325,665,1331,630,1333,588,1330,550],
    [653,1196,712,1126,773,1073,833,1043,893,1043,955,1063,1015,1105,1072,1146,1117,1159,1155,1147,1186,1121,1215,1092,1239,1059,1262,1021,1283,982,1298,943,1315,904,1329,865,1342,820,1352,780,1358,738,1358,695,1350,650],
    [653,1360,712,1252,774,1173,836,1138,900,1136,966,1184,1034,1268,1085,1350,1133,1380,1170,1365,1200,1330,1228,1290,1252,1240,1275,1197,1295,1150,1314,1108,1331,1063,1347,1023,1362,977,1375,930,1386,888,1393,845,1394,798,1379,740],
    [653,1500,712,1400,775,1237,838,1190,904,1197,975,1265,1050,1400,1100,1600,1140,1640,1175,1620,1205,1570,1240,1520,1268,1435,1290,1380,1310,1325,1329,1272,1347,1222,1366,1174,1383,1128,1400,1082,1417,1040,1433,998,1449,956,1465,914],
  ].map(lower),
];

const LEFT_FACE = [
  ...[
    [1243,272,1143,517,1045,660,948,746,848,782,743,780,629,737,494,645,319,484,53,207],
    [1243,458,1145,607,1047,719,952,790,854,823,755,820,649,784,532,712,408,603,290,472],
    [1245,637,1148,737,1052,817,959,868,866,891,773,889,678,860,584,808,492,737,418,658],
    [1247,817,1152,881,1058,934,969,969,881,988,795,984,710,960,629,922,559,872,502,820,473,770],
    [1247,994,1155,1032,1066,1066,980,1088,896,1097,815,1091,739,1075,668,1044,608,1006,563,966,534,930],
    [1249,1173,1160,1190,1074,1207,991,1218,912,1218,836,1210,763,1194,699,1169,646,1141,604,1108,578,1075,566,1040],
    [1249,1348,1163,1352,1081,1354,1001,1352,923,1347,850,1333,783,1318,722,1296,672,1272,632,1246,607,1218,595,1190],
    [1249,1522,1166,1515,1087,1504,1008,1493,932,1480,860,1464,794,1447,737,1427,688,1406,652,1382,627,1357,612,1332],
  ].map(upperLeft),
  ...[
    [653,158,610,135,568,120,527,100,489,84,452,62,418,40,389,18,363,2,344,-21,330,-43,324,-65],
    [653,331,610,300,568,273,527,248,489,222,451,198,417,178,387,157,362,135,342,115,330,97,322,60],
    [653,505,609,464,567,424,525,388,485,356,447,327,412,304,382,287,355,269,335,251,321,237,315,205],
    [653,680,607,622,564,570,522,525,481,487,441,453,404,430,372,412,344,401,322,391,308,379,303,350],
    [653,852,605,777,560,710,516,651,473,605,431,573,393,551,357,542,326,540,303,537,290,534,284,520],
    [653,1024,604,925,558,836,511,772,466,713,422,682,378,667,339,666,303,677,276,688,262,688],
    [653,1196,603,1067,555,954,506,866,459,805,412,773,364,766,316,784,271,819,236,856,222,863],
    [653,1380,602,1188,553,1046,503,940,454,878,403,844,349,847,292,884,231,960,173,1055,167,1062],
    [653,1540,600,1272,551,1100,501,985,451,912,397,885,340,894,273,952,187,1083,92,1262,80,1290],
  ].map(lower),
];

const INNER_LEFT = [
  [53,207,127,191,200,176,269,162,338,148,405,135,469,123,532,110,593,97,652,86,711,74,768,62,823,52,880,42,935,31,988,20,1040,10,1175,255],
  [288,440,285,408,311,373,354,347,403,324,456,305,512,290,568,274,624,260,681,247,737,236,793,226,849,217,907,213,965,214,1027,223,1100,258,1205,372],
  [319,484,350,520,402,555,426,523,462,497,502,473,550,453,600,437,652,422,705,409,761,397,817,387,875,383,933,382,994,387,1062,404,1139,437,1200,480],
  [319,484,402,555,450,610,494,645,515,655,545,638,585,615,630,597,677,580,729,565,782,555,838,547,895,543,957,545,1019,553,1090,568,1170,600,1230,650],
  [400,600,450,640,500,680,550,720,580,760,600,780,625,770,660,757,700,738,749,723,800,711,855,704,912,700,973,698,1040,700,1110,720,1170,740,1230,760],
  [560,760,570,765,580,770,600,780,620,790,640,800,665,820,690,830,720,835,765,835,815,835,868,835,925,835,985,835,1040,800,1110,800,1170,800,1230,800],
].map(upperLeft);

const INNER_BACK = [
  [75,397,143,440,236,471,327,468,418,435,509,362,603,243,701,53,770,227,844,327,930,400],
  [112,470,148,481,239,506,328,500,418,468,507,408,599,318,692,195,764,300,839,378,930,450],
  [122,500,195,553,244,564,330,561,418,532,506,483,595,415,685,333,756,404,810,450,900,520],
  [130,560,235,610,270,638,331,645,418,616,504,577,590,529,678,474,745,530,800,600,870,650],
  [130,600,200,660,250,680,330,690,418,692,504,668,588,628,672,600,735,600,800,620,870,660],
].map(upperRight);

const INNER_LOW = [
  [375,893,357,926,328,968,297,1010,266,1052,235,1100,202,1144,168,1190,132,1240,100,1282],
  [397,883,350,885,320,900,290,930,265,960,235,1005,205,1050,180,1090,140,1165,88,1272],
].map(lower);

/* Face colours: "column:colour" stops, blended across the row. */
const RIGHT_TINT = [
  "0:40a80a 1:a86c06 2:962c04 3:6c1004 4:6a1802 5:3e2002 6:2a2c04 7:000a22 8:021418 9:011a16 10:01180a 12:011206 16:010e06 22:000000",
  "0:98a004 1:9a7004 2:966204 3:6e4402 4:544e02 5:342c02 6:003404 7:002a04 8:001e04 9:002404 10:001602 14:021a04 20:000600",
  "0:7ca806 1:7ca806 2:9c9604 3:7c6a02 4:707c02 5:4c4a02 6:1e4202 7:143202 8:062002 9:042402 10:021a02 11:0c2c02 12:062002 20:000600",
  "0:78a208 1:90a204 2:94a204 3:868402 4:6e7802 5:546802 6:3c5602 7:2a4802 8:244002 9:1a3602 10:0e2a02 12:163202 19:000800",
  "0:60b20a 1:78aa08 2:7ea606 3:868c02 4:868a02 5:7a7e02 6:626c02 7:4e6202 8:3a5402 9:2c4602 10:244002 12:163402 18:040c00",
  "0:78b20c 1:7aac0a 2:82aa08 3:849a02 4:8a9202 5:7e8402 6:6e7a02 7:627002 8:4e6402 9:546602 10:3c5402 12:2c4602 15:1a3202 18:060f00",
  "0:7eba0c 1:84b80c 2:8cb408 3:86a204 4:8ea002 5:8a9402 6:868a02 7:707a02 8:6a7602 9:4a6402 12:304a02 15:203a02 18:081400",
  "0:80bc0c 1:84b80c 2:90bc0a 3:8eb408 4:8eac04 5:90a402 6:8c9a02 7:889402 8:808602 9:687602 11:4c6402 14:2c4402 18:0c1a00",
  "0:7cc40e 1:84c20e 2:90bc0a 3:94bc08 4:96b802 5:9cb202 6:98ae02 7:94a602 8:909a02 9:7c8a02 11:5c7402 14:284a02 18:102400",
  "0:8ac80e 1:88c80c 2:9ac40c 3:aad210 4:a6ca08 5:b4c406 6:b0bc04 7:b0b802 8:a0ac02 9:8a9a02 10:7c9202 12:547402 15:2c5402 18:143000",
  "0:92ce10 1:96d010 2:b2d814 3:cae822 4:c4d408 5:ccdc08 6:b8ca02 7:b0c402 8:a2b402 9:84a002 11:5c8202 14:2c5e02 18:163c00",
  "0:96d010 1:b2de1c 2:d2e022 3:deff26 4:d8fa18 5:c4ec0c 6:aede02 7:a4d402 8:88c402 9:70ac02 10:549a02 12:387802 15:1e5a02 18:104000",
  "0:6cc808 1:aee01a 2:e2e822 3:ffff22 4:ffff36 5:ffff2a 6:ccff00 7:a0e400 8:84cc02 9:58b002 10:409c02 12:2a8402 15:0e5c02 18:064402",
  "0:9cd20a 1:9ad20a 2:e4cc1a 3:fff022 4:ffff3e 5:ffff4c 6:80ff08 7:68ee00 8:54d800 9:1aa400 10:168c02 12:087802 16:066206 20:068010",
  "0:58c60a 1:bcc80a 2:dc9214 3:ffb014 4:ffff36 5:ffff74 6:00ff10 7:00e830 8:18e000 9:08b008 10:14a002 11:047c1c 13:086e08 16:046a1c 19:008a20 21:009048",
  "0:58c60a 1:d04208 2:d42c0c 3:fa3c0c 4:ffd044 5:ffff80 6:00ff10 7:00e820 8:0cd800 9:02b010 10:109e06 11:067a20 14:067024 17:067030 19:00906a 21:0478a4 22:0030a0",
];
const LEFT_TINT = [
  "0:8a5002 1:8a1c02 2:7e0400 3:7c0000 4:740000 5:480000 6:301000 7:201402 8:040804",
  "0:908c02 1:868a02 2:8a5a02 3:803200 4:702800 5:4e2200 6:363000 7:221a02 8:061204 9:000000",
  "0:788c02 1:6c8a02 2:7e5c02 3:765402 4:6e4602 5:503402 6:283002 7:202002 8:061002",
  "0:428802 1:628802 2:7c7c02 3:7e6a02 4:6a5602 5:5c4402 6:4c4002 7:2a2c02 8:1c1c02 9:061002",
  "0:5c8802 1:6a8002 2:767a02 3:706a02 4:6e6002 5:544e02 6:404002 7:2a2c02 8:161802 10:020802",
  "0:608a02 1:5a8402 2:787e02 3:767a02 4:706402 5:685c02 6:564e02 7:403802 8:283002 10:0a0c02",
  "0:5e8802 1:5a8402 2:707a02 3:747802 4:746e02 5:6e6602 6:5e5602 7:4c4402 8:3a3402 10:141402",
  "0:5c8c02 1:5e8a02 2:6c8002 3:787c02 4:787602 5:6e6e02 6:665c02 8:463e02 10:2c2602",
  "0:5e8c02 1:648a02 2:6e8602 3:747e02 4:7c7e02 5:7c7602 6:7a6a02 8:5c5002 10:3c3802",
  "0:649402 1:6e8e02 2:7a9002 3:7e8802 4:888202 5:8a7602 6:8a7002 8:6c6402 10:5a5a02",
  "0:6a9a02 1:6e9402 2:849602 3:8c8e02 4:948c02 5:9a8402 6:927a02 8:7c7402 10:5c6e02",
  "0:6a9a02 1:6c9802 2:869602 3:969402 4:968e02 5:a88e02 6:a48c02 8:8c8a02 10:5c7c02",
  "0:4c9802 1:6a9a02 2:829a02 3:9c9202 4:a69002 5:b48a02 6:b68c02 7:c8b802 8:9cb804 9:6aac02 10:4c8802",
  "0:7ca202 1:88a402 2:a49402 3:a88602 4:b07c02 5:c27a02 6:ccc002 7:ccb202 8:58b802 9:4c9002",
  "0:9ca202 1:90a402 2:b05000 3:b04802 4:b85202 5:d25002 6:e8b802 7:dca202 8:00d810 9:50a000",
  "0:a86002 1:a85c02 2:b02400 3:b80000 4:bc0000 5:e40000 6:e02000 7:ea6800 8:9cd000 9:9cd000",
];
const INNER_LEFT_TINT = [
  "0:00509c 1:009488 2:008c58 3:009418 4:00803a 5:007a26 6:007c20 7:008028 8:007c24 9:008234 10:008630 11:009020 12:009448 13:00b2aa 14:006ad0 15:0000e4 16:d8ff00",
  "0:009410 1:009800 2:009418 3:008400 4:008024 5:008010 6:007a00 7:007c10 8:007804 9:007c04 10:008000 11:009400 12:00a414 13:00b81c 14:00c828 15:00f82c 16:3cff5c",
  "0:009410 1:009418 2:247400 3:207000 4:007000 5:006c00 6:107000 7:007408 8:007c10 9:008400 10:248c00 11:249400 12:14a800 13:18c400 14:34d400 15:70f400 16:70f400",
  "0:206c00 4:206c00 8:2c7400 9:2c7c00 10:3c9000 11:40a000 12:3ca400 13:60b000 14:74c800 15:80d000",
  "0:246800 7:246800 8:307400 9:308000 10:388800 11:4c9400 12:54a000 13:60a800 14:60a800",
];
const INNER_BACK_TINT = [
  "0:ff5030 1:ff1a1c 2:e0080c 3:dc1418 4:dc3a14 5:dc8018 6:d88a18 7:ac6e00 8:b83400 9:b42000",
  "0:ffff60 1:ff7c20 2:dc6408 3:dc5c0c 4:dc680c 5:dce01c 6:d4dc1c 7:40a800 8:a0a800 9:505000",
  "0:e8a820 1:e8a820 2:e8a818 3:e8b820 4:dcac18 5:bce020 6:acdc1c 7:74a400 8:6ca800",
  "0:e8cc18 3:e8cc18 4:e8cc18 5:dcdc18 6:a8dc18 7:40a400",
];
const INNER_LOW_TINT = ["0:001c04 2:001808 5:00140a 7:000c12 8:000410"];

const parseTint = (s) =>
  s.split(" ").map((t) => {
    const [c, h] = t.split(":");
    return [Number(c), [0, 2, 4].map((k) => parseInt(h.slice(k, k + 2), 16))];
  });
const tintAt = (stops, c) => {
  const hi = stops.findIndex((s) => s[0] >= c);
  if (hi < 0) return stops[stops.length - 1][1];
  if (hi === 0 || stops[hi][0] === c) return stops[hi][1];
  const [c0, a] = stops[hi - 1];
  const [c1, b] = stops[hi];
  return a.map((v, k) => Math.round(v + ((b[k] - v) * (c - c0)) / (c1 - c0)));
};
/* Wires fade with the shade of the face they bound. */
const wire = (rgb) => {
  const lum = (rgb[0] * 0.3 + rgb[1] * 0.6 + rgb[2] * 0.1) / 255;
  return `rgb(${rgb.map((v) => Math.round(v * 0.45 + 60 + 40 * lum))})`;
};

function Patch({ rows, tints, ball, shrink = 0.09 }) {
  const faces = [];
  for (let r = 0; r + 1 < rows.length; r++) {
    const a = rows[r];
    const b = rows[r + 1];
    const stops = parseTint(tints[r]);
    const n = Math.max(a.length, b.length);
    const at = (row, i) => row[Math.min(i, row.length - 1)];
    for (let c = n - 2; c >= 0; c--) {
      const q = [at(a, c), at(a, c + 1), at(b, c + 1), at(b, c)];
      const tint = tintAt(stops, c);
      faces.push(
        <polygon key={`${r}-${c}`} points={q.map((p) => p.map((v) => v.toFixed(1)).join()).join(" ")} fill={`rgb(${tint})`} stroke={wire(tint)} />
      );
    }
  }
  return (
    <g>
      <g strokeWidth="1.5" strokeLinejoin="round">{faces}</g>
      <g fill="none" stroke="#d2d2c8" strokeOpacity=".7" strokeWidth="1.2" strokeDasharray="5 2">
        {rows.map((row, r) => <polyline key={r} points={row.map((p) => p.join()).join(" ")} />)}
      </g>
      {rows.flatMap((row, r) =>
        row.map(([x, y], i) => <circle key={`${r}.${i}`} cx={x} cy={y} r={Math.max(3, ball - i * shrink)} fill="url(#ball)" />)
      )}
    </g>
  );
}

function Scene() {
  return (
    <svg width="2092" height="990" viewBox="583 1007 2092 990">
      <polygon points={upperLeft([1175,255,1240,330,1215,400,1195,365]).map((p) => p.join()).join(" ")} fill="#fff07c" />
      <Patch rows={INNER_LEFT} tints={INNER_LEFT_TINT} ball={3.9} shrink={0.02} />
      <Patch rows={INNER_BACK} tints={INNER_BACK_TINT} ball={4.2} shrink={0.02} />
      <Patch rows={INNER_LOW} tints={INNER_LOW_TINT} ball={3.2} />
      <Patch rows={LEFT_FACE} tints={LEFT_TINT} ball={5.2} shrink={0.16} />
      <Patch rows={RIGHT_FACE} tints={RIGHT_TINT} ball={5.2} />
    </svg>
  );
}

/* ------------------------------------------------------------------ */
/* Panels                                                              */
/* ------------------------------------------------------------------ */

function LeftColumn() {
  const layers = [["New layer 3", true], ["New layer 2", true], ["New layer 1", true, true], ["Default Layer", false]];
  const channels = [
    ["Default Channel – 0/...", true, "#5d5448", "#b8610a", "#9c5208"],
    ["Channel 1 – 0/0/0", false, "#4d3d74", "#5a12d8", "#4a10b8"],
    ["Channel 2 – 0/0/0", false, "#3c6478", "#1296dc", "#0a78b4"],
  ];
  return (
    <Column $w={547} $pad="17px 3px 0 6px">
      <Slot title="Content Presets" />
      <Slot title="Halfedge Interface" h={426} open icon={<StarIcon />} ix={2} iy={2}>
        <Stack $pad="0 6px">
          <Row $h={44} $l={0}><Label $track={1}>VHDS: V1088 E4224 F1024</Label></Row>
          <Table $h={300}>
            <HeadGrid><span /><span>Name</span><span>V</span><span>E</span><span>F</span></HeadGrid>
            <LayerGrid>
              {layers.map(([name, on, sel]) => (
                <React.Fragment key={name}>
                  <Cell $sel={sel} $l={2}><Check on={on} /></Cell>
                  <Cell $text $l={3} $sel={sel}>{name}</Cell>
                  <Cell $flat={sel}><Dome /></Cell>
                  <Cell $flat={sel}><Dome /></Cell>
                  <Cell $flat={sel}><Dome /></Cell>
                </React.Fragment>
              ))}
            </LayerGrid>
          </Table>
          <IconBar>
            <DocIcon kind="add" /><DocIcon kind="remove" /><DocIcon kind="link" /><ImportIcon /><ExportIcon />
            <FolderIcon /><DiskIcon /><DocIcon kind="gear" /><DocIcon kind="edit" />
          </IconBar>
        </Stack>
      </Slot>
      <Slot title="Selection Interface" h={282} open>
        <Stack $pad="6px 6px 0">
          <Table $h={203}>
            <ChannelGrid>
              {channels.map(([name, on, top, fill, edge]) => (
                <React.Fragment key={name}>
                  <Cell $text $l={3} $track={name[0] === "D" ? 0.3 : 0.9}>{name}</Cell>
                  <Cell><Check on /></Cell>
                  <RadioCell><Radio on={on} /></RadioCell>
                  <ActionCell><Swatch $top={top} $fill={fill} $edge={edge} /></ActionCell>
                  <ActionCell $off={on}><MinusIcon off={on} /></ActionCell>
                </React.Fragment>
              ))}
            </ChannelGrid>
          </Table>
          <Button $t={9} $h={40} $r={0}>New Channel</Button>
        </Stack>
      </Slot>
      <Slot title="Surface Remeshing" h={170} open>
        <Stack $pad="0 6px">
          <Row $h={58} $l={10}><Check>Expert Mode</Check></Row>
          <Row $h={39}><Label $w={90} $l={1}>Pattern</Label><Combo>Triangles</Combo></Row>
          <Button $t={9} $r={4}>Remesh</Button>
        </Stack>
      </Slot>
      <Slot title="Discrete Conformal Parametrization" h={674} open>
        <Stack $pad="0 4px">
          <Row $h={52} $l={10}><Check on>Expert Mode</Check></Row>
          <Row $h={39}><Combo>Petsc/Tao Numerics</Combo></Row>
          <Row $h={42} $t={6}><Label $w={268} $l={4}>Tolerance Exp</Label><Spin>–9</Spin></Row>
          <Row $h={42} $t={6}><Label $w={268} $l={4}>Max Iterations</Label><Spin>100</Spin></Row>
          <Row $h={39} $t={5}><Label $w={268} $l={4}>Cut Strategy</Label><Combo>Automatic</Combo></Row>
          <Row $h={39} $t={5}><Label $w={268} $l={4}>Target Geometry</Label><Combo>Automatic</Combo></Row>
          <Row $h={53} $l={10}><Check on>Create Uniformization</Check></Row>
          <Stack $gap={5}>
            <Button>Unwrap</Button>
            <Button $r={0}>Check Gauß–Bonnet</Button>
            <Button>Recalculate Layout</Button>
            <Button>Reset Surface</Button>
          </Stack>
          <Stack $gap={23} $pad="21px 4px 0 3px">
            <Slot sub title="Boundary" />
            <Slot sub title="Cones" />
            <Slot sub title="Selected Nodes" />
            <Slot sub title="Tools" />
          </Stack>
        </Stack>
      </Slot>
    </Column>
  );
}

function DataVisualization() {
  return (
    <VizBody>
      <VizLeft>
        <DataList>
          <DataGrid>
            <Cell><BarsIcon /></Cell>
            <Cell><FaceIcon s={26} /></Cell>
            <Cell $l={4}><Check on /></Cell>
            <Cell $text $l={3} $track={0.4}>Triangle Area Histogram</Cell>
            <ActionCell><MinusIcon /></ActionCell>
            <Cell $flat><Palette s={24} /></Cell>
            <Cell $flat><FaceIcon s={26} /></Cell>
            <Cell $sel $l={4}><Check on /></Cell>
            <Cell $text $l={3} $sel $track={0.55}>Triangle Area Node Col...</Cell>
            <ActionCell><MinusIcon /></ActionCell>
          </DataGrid>
        </DataList>
        <Group $h={380} $m="22px 21px 0 4px" $pl={10} $pr={8}>
          <GroupTitle>Options</GroupTitle>
          <Row $h={39} $t={11}><Label $w={162}>Colors</Label><Combo>Hue Inverse</Combo></Row>
          <Row $h={42} $t={6} $gap={6}>
            <Row $h={42} $l={10}><Check w={148}>Clamp</Check></Row>
            <Spin w={152}>0,002</Spin><Spin>0,013</Spin>
          </Row>
          <Row $h={42} $t={6}><Label $w={164}>Offset</Label><Spin>0,005</Spin></Row>
          <Row $h={52} $l={10}><Check track={0.45}>Center Color of Zero</Check></Row>
        </Group>
      </VizLeft>
      <VizRight>
        <Tabs>
          <Tab $w={221} $l={13} $r={2}><SlidersIcon />Configuration</Tab>
          <Tab $w={184} $l={12} $r={5} $on><BarsIcon />Histogram</Tab>
          <Tab $w={133} $l={13}><SheetIcon /><Label $l={3}>Table</Label></Tab>
        </Tabs>
        <TabPane><Histogram /></TabPane>
      </VizRight>
    </VizBody>
  );
}

function RightColumn() {
  const plugins = [
    [<CurvatureIcon />, "Opposite Edges Curvature", "0,1"],
    [<PlanarIcon />, "Planar N–Gons", "1"],
    [<PlanarIcon />, "Planar Quads", "5"],
    [<PlanarIcon />, "Planar Vertex Stars", "1"],
    [null, "Reference Surface Energy", "10"],
    [<SpringIcon />, "Spring Energy", "5", true],
    [null, "Touching Cot Incircles", "1"],
    [<BallIcon />, "Willmore Energy", "1"],
  ];
  return (
    <Column $w={717} $pad="18px 7px 0 7px" $gap={21}>
      <Slot title="Optimizer Plugins" h={788} open>
        <Row $h={56} $l={16}><Check track={0.3}>Normalize Energies</Check></Row>
        <Group $h={380} $m="13px 13px 0 10px" $pl={9} $pr={4}>
          <GroupTitle>Optimizer Plugins</GroupTitle>
          <Row $h={350} $t={9}>
            <PluginList>
              <PluginGrid>
                {plugins.map(([icon, name, value, sel]) => (
                  <React.Fragment key={name}>
                    <PluginIcon $flat={sel}>{icon}</PluginIcon>
                    <Cell $sel={sel} $l={4}><Check on={sel} /></Cell>
                    <Cell $text $l={3} $sel={sel} $track={name[0] === "R" ? 0.15 : 0.4}>{name}</Cell>
                    <Spin h={42}>{value}</Spin>
                  </React.Fragment>
                ))}
              </PluginGrid>
            </PluginList>
            <ScrollBar>
              <ScrollEnd $up><Chevron /></ScrollEnd>
              <ScrollThumb />
              <Spacer />
              <ScrollEnd><Chevron /></ScrollEnd>
            </ScrollBar>
          </Row>
        </Group>
        <Group $h={300} $m="17px 6px 0" $pl={4} $pr={7}>
          <Group $h={277} $m="11px 0 0" $pl={0} $pr={8}>
            <GroupTitle $l={10}>Plugin Options</GroupTitle>
            <Row $h={43} $t={18} $l={20}>
              <Check w={146} track={0.5}>diag's</Check><Check w={176} track={0.5}>c–update</Check><Button $h={43}>update</Button>
            </Row>
            <Row $h={48} $l={16}><Radio w={146} on>const.</Radio><Radio w={186}>avg.</Radio><Radio>F–const.</Radio></Row>
            <Row $h={41} $l={16}>
              <Radio w={146}>orig.</Radio><Radio w={186}>range</Radio><Radio w={130}>discr.</Radio><Combo>CEIL</Combo>
            </Row>
            <Row $h={42} $t={6} $l={10}>
              <Label $w={146}>Length</Label>
              <Row $h={42} $gap={6}><Spin w={181} half>0</Spin><Spin w={129} off>0,7</Spin><Spin w={176} off>5</Spin></Row>
            </Row>
            <Row $h={42} $t={5} $l={10}><Label $w={146}>Strength</Label><Spin>1</Spin></Row>
          </Group>
        </Group>
      </Slot>
      <Slot title="Optimization" h={760} open>
        <Slot sub title="Constraints" h={386} open m="21px 12px 0 9px">
          <Stack $pad="3px 0 0">
            {["Global", "Selection", "Boundary"].map((name) => (
              <Row key={name} $h={52} $l={9}>
                <Label $w={202} $track={0.4}>{name}</Label>
                <Check w={158} on={name === "Selection"}>X</Check>
                <Check w={156} on={name === "Selection"}>Y</Check>
                <Check on={name === "Selection"}>Z</Check>
              </Row>
            ))}
            {["Allow Inner Boundary Movements", "Tangential", "Smooth Gradient", "SmoothSurface"].map((name) => (
              <Row key={name} $h={52} $l={19}><Check track={0.12}>{name}</Check></Row>
            ))}
          </Stack>
        </Slot>
        <Stack $pad="14px 8px 0 6px">
          <Row $h={42}><Label $w={306}>Tolerance</Label><Spin>–12</Spin></Row>
          <Row $h={42} $t={10}><Label $w={306}>Iterations</Label><Spin>20</Spin></Row>
          <Row $h={39} $t={9}><Label $w={306} $track={0.5}>Method</Label><Combo>LMVM</Combo></Row>
          <Row $h={28} $t={17} $l={10}><Check track={0.05}>Live Geometry Updates</Check></Row>
          <Row $h={60} $t={16} $gap={4}><Button $w={338} $h={60} $r={8}>Optimize</Button><Button $w={338} $h={60} $r={6}>Animate</Button></Row>
          <Progress>Finished DIVERGED_MAXITS</Progress>
        </Stack>
      </Slot>
      <Slot title="Content Appearance" h={173} open icon={<SearchIcon />} ix={5} iy={0}>
        <Stack $gap={23} $pad="20px 4px 0 6px">
          <Slot sub title="Faces" icon={<FaceIcon s={24} />} ix={7} iy={2} />
          <Slot sub title="Texture" icon={<PictureIcon />} ix={3} iy={1} />
          <Slot sub title="Lines" icon={<FaceIcon s={24} edge />} ix={7} iy={2} />
          <Slot sub title="Points" icon={<FaceIcon s={24} points />} ix={7} iy={2} />
        </Stack>
      </Slot>
      <Slot title="Job Monitor" />
    </Column>
  );
}

const Progress = styled.div`
  height: 43px;
  margin-top: 9px;
  padding-bottom: 2px;
  border: 2px solid #3a3a3a;
  outline: 3px solid #444;
  outline-offset: -5px;
  background: linear-gradient(#686868, #595959 48%, #505050 50%, #6a6a6a);
  color: #c4c4c4;
  line-height: 37px;
  text-align: center;
`;

const WindowButtons = () => (
  <svg width="114" height="28" viewBox="0 0 114 28">
    <g stroke="#333" strokeWidth="1">
      <rect x="1" y="19" width="15" height="7" fill="#e4e4e4" />
      <path d="M42 4 H56 V18 H51 M35 10 H49 V25 H35 Z" fill="none" stroke="#e4e4e4" strokeWidth="3.4" />
    </g>
    <path d="M94 5 L112 25 M112 5 L94 25" stroke="#e8e8e8" strokeWidth="4.2" />
  </svg>
);

export default function App() {
  const menu = [
    ["File", 62, true], ["Viewer", 102, true], ["Camera", 114, true], ["Content", 112], ["Window", 111, true],
    ["XploreMath", 157], ["Python Tools", 171], ["Halfedge", 127], ["Look and Feel", 162],
  ];
  const shelf = ["Custom", "DDG", "Editing", "Generators", "Geometry", "NURBS",
    "Selection", "Subdivision", "Texture", "Texture Remeshing", "Topology", "Vector Fields"];
  return (
    <Desktop>
      <GlobalStyle />
      <Defs />
      <Frame>
        <TitleRow><AppIcon /><WindowTitle>VaryLab[Ultimate]</WindowTitle><WindowButtons /></TitleRow>
        <MenuRow>
          {menu.map(([t, w, key]) => (
            <MenuItem key={t} $w={w}>{key ? <Mnemonic>{t[0]}</Mnemonic> : t[0]}{t.slice(1)}</MenuItem>
          ))}
          <Spacer />
          <MenuItem><Mnemonic>H</Mnemonic>elp</MenuItem>
        </MenuRow>
        <ToolRow>
          <PlainTool><OpenIcon /></PlainTool>
          <Divider $l={16} $r={4} />
          <Tool><ExpandIcon /></Tool><Tool><RotateIcon /></Tool><Tool><LensIcon /></Tool>
          <PlainTool $l={11} $r={11}><CubeIcon /></PlainTool>
          <Divider $l={7} $r={3} />
          <Tool><FaceIcon points /></Tool><Tool><FaceIcon edge /></Tool><Tool><FaceIcon /></Tool>
          <Divider $l={6} $r={4} />
          <Tool><FaceIcon points /></Tool><Tool><FaceIcon edge /></Tool><Tool><FaceIcon /></Tool>
          <Divider $l={6} $r={3} />
          <Tool><ExpandIcon /></Tool>
          <PlainTool $l={11} $r={11}><MouseIcon /></PlainTool>
          <Divider $l={7} $r={11} /><Divider $l={0} $r={4} />
          <Combo w={168} h={43}>Default</Combo>
          <PlainTool $l={1}><Tool><LayoutIcon side="left" /></Tool></PlainTool>
          <Tool><LayoutIcon side="right" /></Tool><Tool><LayoutIcon side="top" /></Tool><Tool><LayoutIcon side="bottom" /></Tool>
          <Divider $l={6} $r={15} />
          <PlainTool $r={21}><PythonIcon /></PlainTool>
          <PlainTool><PythonIcon /></PlainTool>
          <Monitor>Job Progress Monitor</Monitor>
        </ToolRow>
        <Shelf>
          {shelf.map((t) => (
            <ShelfItem key={t}><Palette s={23} /><ShelfName>{t}</ShelfName><ShelfArrow><Chevron /></ShelfArrow></ShelfItem>
          ))}
        </Shelf>
        <Body>
          <LeftColumn />
          <Center>
            <Dock $h={758} $pad="18px 4px 0 7px">
              <Slot title="Texture Space Viewer 2D" icon={<BrushIcon />} />
              <Slot title="Texture Space Viewer 3D" icon={<BrushIcon />} />
              <Slot title="Optimization Protocol" />
              <Slot title="Halfedge Data Visualitazion" h={629} open><DataVisualization /></Slot>
            </Dock>
            <Viewport><Scene /></Viewport>
            <Dock $h={76} $pad="17px 4px 0 7px">
              <Slot title="PythonConsole" />
              <Slot title="Console" />
            </Dock>
          </Center>
          <RightColumn />
        </Body>
      </Frame>
    </Desktop>
  );
}
